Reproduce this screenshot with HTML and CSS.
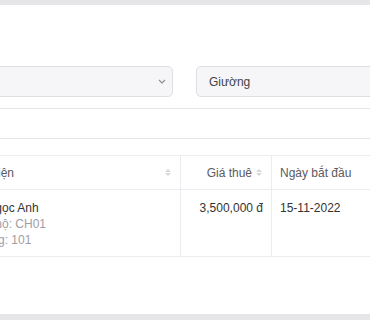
FILE: index.html
```html
<!DOCTYPE html>
<html lang="vi">
  <head>
    <meta charset="UTF-8">
    <meta name="viewport" content="width=device-width, initial-scale=1">
    <title>Hợp đồng thuê</title>
    <link rel="stylesheet" href="styles.css">
  </head>
  <body>
    <div class="card">
      <div class="filters">
        <div class="select select-building">
          <span class="select-value">Tòa nhà</span>
          <svg class="chevron" width="8" height="5" viewBox="0 0 8 5"><path d="M1 1l3 3 3-3" fill="none" stroke="#8a8a90" stroke-width="1.1"/></svg>
        </div>
        <div class="select select-type">
          <span class="select-value">Giường</span>
        </div>
      </div>
      <div class="search"></div>
      <table class="contracts">
        <thead>
          <tr>
            <th class="col-name">
              <div class="th-inner"><span>Đại diện</span><span class="sort"></span></div>
            </th>
            <th class="col-price">
              <div class="th-inner right"><span>Giá thuê</span><span class="sort"></span></div>
            </th>
            <th class="col-date">
              <div class="th-inner"><span>Ngày bắt đầu</span></div>
            </th>
          </tr>
        </thead>
        <tbody>
          <tr>
            <td class="col-name">
              <div class="name">Lê Ngọc Anh</div>
              <div class="meta">Căn hộ: CH01</div>
              <div class="meta">Phòng: 101</div>
            </td>
            <td class="col-price right">3,500,000 đ</td>
            <td class="col-date">15-11-2022</td>
          </tr>
        </tbody>
      </table>
    </div>
  </body>
</html>
```

FILE: styles.css
```css
html, body {
  margin: 0;
  overflow: hidden;
  background-color: #e6e6e9;
  font-family: "Liberation Sans", Arial, sans-serif;
  font-size: 12px;
  color: #333;
}

.card {
  margin: 5px 0 0 -38px;
  width: 520px;
  height: 309px;
  padding-top: 61px;
  box-sizing: border-box;
  background-color: white;
}

.filters {
  display: flex;
  gap: 23px;
}

.select {
  display: flex;
  align-items: center;
  height: 31px;
  box-sizing: border-box;
  border: 1px solid #dedee3;
  border-radius: 5px;
  background-color: #f6f6f8;
  padding: 0 12px;
  color: #444;
}

.select-building {
  width: 211px;
  justify-content: space-between;
  padding-right: 6px;
}

.select-building .select-value {
  visibility: hidden;
}

.select-type {
  flex: 1;
}

.search {
  margin-top: 11px;
  height: 31px;
  box-sizing: border-box;
  border-top: 1px solid #e4e4e9;
  border-bottom: 1px solid #e4e4e9;
}

.contracts {
  margin-top: 16px;
  width: 100%;
  border-collapse: collapse;
  table-layout: fixed;
}

.contracts th, .contracts td {
  border-top: 1px solid #ececf0;
  border-bottom: 1px solid #ececf0;
  border-left: 1px solid #ececf0;
  padding: 0 8px 0 8px;
  text-align: left;
  vertical-align: top;
}

.contracts th:first-child, .contracts td:first-child {
  border-left: none;
}

.contracts th {
  height: 33px;
  vertical-align: middle;
  font-weight: normal;
  color: #5a5a60;
}

.contracts td {
  padding-top: 10px;
  padding-bottom: 8px;
  line-height: 16px;
  height: 48px;
}

.col-name { width: 202px; }
.col-price { width: 74px; }

.th-inner {
  display: flex;
  align-items: center;
  justify-content: space-between;
}

.th-inner.right {
  justify-content: flex-end;
  gap: 4px;
}

.right {
  text-align: right;
}

.contracts td.right {
  text-align: right;
}

.sort {
  display: inline-flex;
  flex-direction: column;
  gap: 1px;
  width: 7px;
}

.sort::before, .sort::after {
  content: "";
  display: block;
  width: 0;
  height: 0;
  border-left: 3.5px solid transparent;
  border-right: 3.5px solid transparent;
}

.sort::before {
  border-bottom: 3.5px solid #d6d6dc;
}

.sort::after {
  border-top: 3.5px solid #d6d6dc;
}

.name {
  color: #333;
}

.meta {
  color: #9e9ea6;
}
```
